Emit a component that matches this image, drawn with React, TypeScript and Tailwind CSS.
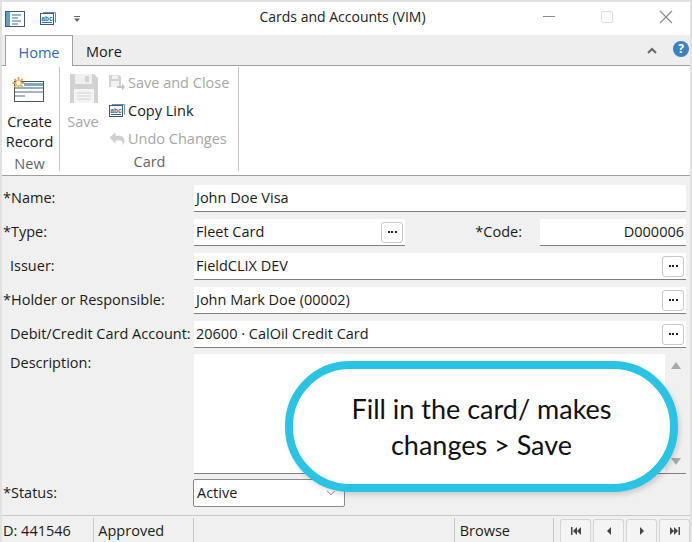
import React from 'react';
import { ChevronDown } from 'lucide-react';

const DocIcon = () => (
  <svg width="20" height="16" viewBox="0 0 20 16" className="block">
    <rect x="0.5" y="0.5" width="19" height="15" fill="#fff" stroke="#45586a" />
    <rect x="1" y="1" width="4" height="14" fill="#5aa0d0" />
    <path d="M7 4h9M7 7h6M7 10h9M7 13h6" stroke="#2f6f9f" strokeWidth="1" />
  </svg>
);

const AbcIcon = () => (
  <svg width="16" height="14" viewBox="0 0 16 14" className="block">
    <rect x="0.5" y="1.5" width="13" height="11" fill="#fff" stroke="#45586a" />
    <path d="M3 0.500h12.500v10" fill="none" stroke="#5a8fc0" />
    <text x="7" y="8.500" textAnchor="middle" fontSize="6.500" fontWeight="700" fontFamily="'Liberation Mono', monospace" fill="#2f5f8f">abc</text>
    <path d="M2 10.500h10" stroke="#2f6f9f" />
  </svg>
);

const CreateIcon = () => (
  <svg width="32" height="26" viewBox="0 0 32 26" className="block">
    <rect x="2.500" y="4.500" width="29" height="20" fill="#fff" stroke="#4d5358" />
    <rect x="12" y="6" width="19" height="3" fill="#7fa6c2" />
    <rect x="3" y="10" width="28" height="2" fill="#8fb0c6" />
    <rect x="3" y="14" width="28" height="2" fill="#a5b5bf" />
    <rect x="3" y="18" width="10" height="2" fill="#a5b5bf" />
    <path d="M6.500 0v12M0.500 6h12M2.300 1.800l8.400 8.400M10.700 1.800l-8.400 8.400" stroke="#e3a94d" strokeWidth="1.800" />
    <circle cx="6.500" cy="6" r="2.200" fill="#fff" />
  </svg>
);

const SaveIcon = () => (
  <svg width="28" height="29" viewBox="0 0 28 29" className="block">
    <path d="M0 0h24l4 4v25H0z" fill="#d2d2d2" />
    <rect x="5" y="0" width="17" height="10" fill="#f0f0f0" />
    <rect x="15" y="2" width="4" height="6" fill="#d2d2d2" />
    <rect x="4" y="15" width="20" height="14" fill="#f4f4f4" />
    <path d="M7 19h14M7 22h14M7 25h14" stroke="#d2d2d2" />
  </svg>
);

const SaveCloseIcon = () => (
  <svg width="16" height="16" viewBox="0 0 16 16" className="block">
    <path d="M0 0h10l2 2v10H0z" fill="#d2d2d2" />
    <rect x="3" y="0.500" width="6" height="3.500" fill="#f2f2f2" />
    <rect x="2" y="6" width="8" height="6" fill="#f2f2f2" />
    <path d="M8 11h5V8.500l3 3.500-3 3.500V13H8z" fill="#c4c4c4" />
  </svg>
);

const UndoIcon = () => (
  <svg width="16" height="14" viewBox="0 0 16 14" className="block">
    <path d="M6.500 0.500v3.300h3.500c3.500 0 5.500 2.200 5.500 5 0 2-1 3.700-2.500 4.700.6-1 .8-1.900.6-2.800-.4-1.600-1.800-2.200-3.600-2.200h-3.500v3.300L0.500 5.500z" fill="#cfcfcf" />
  </svg>
);

const Label = ({ star = false, children, top = false }: { star?: boolean; children: React.ReactNode; top?: boolean }) => (
  <div className={`w-[192px] shrink-0 whitespace-nowrap ${star ? 'pl-[1px]' : 'pl-[8px]'} ${top ? 'self-start pt-[2px]' : ''}`}>
    {star ? '*' : ''}{children}
  </div>
);

const DotsButton = () => (
  <button className="w-[22px] h-[21px] bg-white border border-[#c8c8c8] rounded-[3px] flex items-center justify-center shrink-0 mr-[2px]">
    <span className="flex gap-[1.500px]">
      <span className="w-[2px] h-[2px] bg-[#222]" />
      <span className="w-[2px] h-[2px] bg-[#222]" />
      <span className="w-[2px] h-[2px] bg-[#222]" />
    </span>
  </button>
);

const Field = ({ value, dots = false, className = 'flex-1', right = false }: { value: string; dots?: boolean; className?: string; right?: boolean }) => (
  <div className={`${className} h-[27px] bg-white border-b border-[#808080] flex items-center pl-[2px]`}>
    <span className={`flex-1 whitespace-nowrap ${right ? 'text-right pr-[2px]' : ''}`}>{value}</span>
    {dots && <DotsButton />}
  </div>
);

const SmallAction = ({ icon, label, dim = false }: { icon: React.ReactNode; label: string; dim?: boolean }) => (
  <div className={`h-[28px] flex items-center gap-[3px] whitespace-nowrap ${dim ? 'text-[#a6a6a6]' : 'text-[#1a1a1a]'}`}>
    <span className="w-[16px] flex justify-center">{icon}</span>
    {label}
  </div>
);

const NavButton = ({ d }: { d: string }) => (
  <button className="w-[31px] h-[23px] bg-[#f4f4f4] border border-b-0 border-[#d4d4d4] rounded-t-[3px] flex items-center justify-center">
    <svg width="10" height="8" viewBox="0 0 10 8"><path d={d} fill="#444" /></svg>
  </button>
);

export default function App() {
  return (
    <div className="w-[692px] h-[542px] relative overflow-hidden bg-[#e1e1e1] px-[2px] pt-[2px] text-[14.5px] text-[#1a1a1a] font-['Open_Sans','Noto_Sans',sans-serif] leading-none">
      <div className="h-[33px] bg-white flex items-center relative">
        <div className="ml-[3px]"><DocIcon /></div>
        <div className="ml-[15px]"><AbcIcon /></div>
        <svg width="8" height="8" viewBox="0 0 8 8" className="ml-[17px]">
          <path d="M1 1h6v1H1zM1 3.500h6L4 7z" fill="#666" />
        </svg>
        <div className="flex-1 text-center pl-[70px] pb-[3px] text-[14px] text-[#222]">Cards and Accounts (VIM)</div>
        <div className="flex items-center w-[156px] shrink-0 pb-[4px]">
          <span className="w-[12px] h-[1px] bg-[#8a8a8a] ml-[9px]" />
          <span className="w-[12px] h-[12px] border border-[#dedede] rounded-[2px] ml-[46px]" />
          <svg width="14" height="14" viewBox="0 0 14 14" className="ml-[46px]">
            <path d="M1 1l12 12M13 1L1 13" stroke="#8a8a8a" strokeWidth="1.100" />
          </svg>
        </div>
      </div>

      <div className="h-[31px] bg-[#eeeeee] border-b border-[#a0a0a0] flex items-end pl-[3px] relative">
        <div className="w-[68px] h-[31px] -mb-[1px] bg-white border border-b-0 border-[#a0a0a0] flex items-center justify-center text-[#2a6cb8] pt-[5px]">Home</div>
        <div className="w-[62px] h-[30px] flex items-center justify-center pt-[5px]">More</div>
        <div className="flex-1" />
        <svg width="10" height="7" viewBox="0 0 10 7" className="mb-[11px] mr-[16px]">
          <path d="M1 6l4-4 4 4" fill="none" stroke="#666" strokeWidth="2" />
        </svg>
        <div className="w-[16px] h-[16px] rounded-full bg-[#3b82c4] text-white text-[12px] font-bold flex items-center justify-center mb-[8px] mr-[1px]">?</div>
      </div>

      <div className="h-[110px] bg-white border-b border-[#a0a0a0] flex pt-[1px] pb-[4px]">
        <div className="w-[58px] border-r border-[#c4c4c4] flex flex-col items-center pr-[2px]">
          <div className="mt-[10px] h-[28px] mr-[3px]"><CreateIcon /></div>
          <div className="mt-[8px] leading-[20px] text-center">Create<br />Record</div>
          <div className="mt-[5px] text-[#666]">New</div>
        </div>
        <div className="w-[179px] border-r border-[#c4c4c4] flex flex-col">
          <div className="flex flex-1">
            <div className="w-[49px] flex flex-col items-center text-[#a6a6a6]">
              <div className="mt-[7px] mr-[1px]"><SaveIcon /></div>
              <div className="mt-[12px] -ml-[3px]">Save</div>
            </div>
            <div className="pt-[2px]">
              <SmallAction dim icon={<SaveCloseIcon />} label="Save and Close" />
              <SmallAction icon={<AbcIcon />} label="Copy Link" />
              <SmallAction dim icon={<UndoIcon />} label="Undo Changes" />
            </div>
          </div>
          <div className="text-center text-[#666] pb-[2px] pl-[1px]">Card</div>
        </div>
      </div>

      <div className="bg-[#f0f0f0] h-[339px] flex flex-col gap-[7px] pt-[9px] pr-[4px]">
        <div className="flex items-center">
          <Label star>Name:</Label>
          <Field value="John Doe Visa" />
        </div>
        <div className="flex items-center">
          <Label star>Type:</Label>
          <Field value="Fleet Card" dots className="w-[211px]" />
          <div className="flex-1 text-right pr-[18px] pl-[4px]">*Code:</div>
          <Field value="D000006" right className="w-[146px]" />
        </div>
        <div className="flex items-center">
          <Label>Issuer:</Label>
          <Field value="FieldCLIX DEV" dots />
        </div>
        <div className="flex items-center">
          <Label star>Holder or Responsible:</Label>
          <Field value="John Mark Doe (00002)" dots />
        </div>
        <div className="flex items-center">
          <Label>Debit/Credit Card Account:</Label>
          <Field value="20600 · CalOil Credit Card" dots />
        </div>
        <div className="flex -mt-[1px]">
          <Label top>Description:</Label>
          <div className="flex-1 h-[120px] bg-white border-b border-[#808080] flex justify-end">
            <div className="w-[21px] bg-[#f0f0f0] flex flex-col items-center justify-between py-[8px]">
              <svg width="10" height="7" viewBox="0 0 10 7"><path d="M5 0l5 7H0z" fill="#a8a8a8" /></svg>
              <svg width="10" height="7" viewBox="0 0 10 7"><path d="M5 7l5-7H0z" fill="#a8a8a8" /></svg>
            </div>
          </div>
        </div>
        <div className="flex items-center -mt-[2px]">
          <Label star>Status:</Label>
          <div className="w-[152px] h-[28px] -ml-[1px] bg-white border border-[#8a8a8a] rounded-[2px] flex items-center justify-between pl-[3px] pr-[6px]">
            Active
            <ChevronDown size={14} strokeWidth={1} color="#333" />
          </div>
        </div>
      </div>

      <div className="h-[27px] bg-[#f0f0f0] border-t border-[#c8c8c8] flex items-end">
        <div className="w-[93px] h-[24px] border-r border-[#c8c8c8] flex items-center pl-[1px] pt-[2px]">D: 441546</div>
        <div className="w-[100px] h-[24px] border-r border-[#c8c8c8] flex items-center pl-[4px] pt-[2px]">Approved</div>
        <div className="w-[263px] h-[24px] border-r border-[#c8c8c8]" />
        <div className="w-[100px] h-[24px] border-r border-[#c8c8c8] flex items-center pl-[5px] pt-[2px]">Browse</div>
        <div className="flex gap-[2px] ml-[6px]">
          <NavButton d="M0 0h1.500v8H0zM6 0v8L2 4zM10 0v8L6 4z" />
          <NavButton d="M7 0v8L3 4z" />
          <NavButton d="M3 0v8l4-4z" />
          <NavButton d="M0 0v8l4-4zM4 0v8l4-4zM8.500 0H10v8H8.500z" />
        </div>
      </div>

      {/* callout sits over the description box and status row */}
      <div className="absolute left-[285px] top-[361px] w-[393px] h-[131px] bg-white border-[8px] border-[#29c4e4] rounded-[65px] shadow-[2px_3px_5px_rgba(0,0,0,0.15)] flex items-center justify-center text-center text-[27px] leading-[36px] text-[#111] font-['Lato',sans-serif]">
        <span>Fill in the card/ makes<br />changes &gt; Save</span>
      </div>
    </div>
  );
}
